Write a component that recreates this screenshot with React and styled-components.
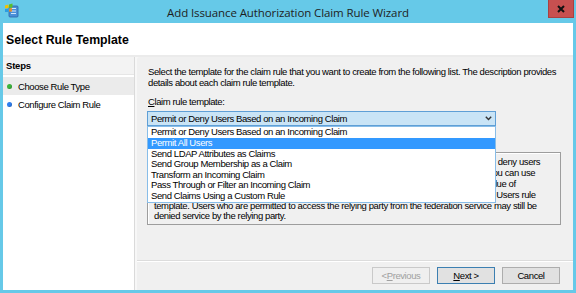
import React from 'react';
import styled, { createGlobalStyle } from 'styled-components';

const GlobalStyle = createGlobalStyle`
  html, body { margin: 0; padding: 0; background: #66c9e8; }
  body { font-family: "Liberation Sans", Arial, sans-serif; }
  * { box-sizing: border-box; }
`;

const Window = styled.div`
  width: 576px;
  height: 293px;
  background: #66c9e8;
  display: flex;
  flex-direction: column;
  overflow: hidden;
`;

const TitleBar = styled.div`
  flex: none;
  height: 23px;
  display: grid;
  grid-template-columns: 1fr auto 1fr;
  align-items: center;
`;

const TitleIcon = styled.div`
  display: flex;
  align-items: center;
  padding-left: 4px;
  padding-bottom: 2px;
`;

const TitleText = styled.div`
  font-family: "Open Sans", "Noto Sans", sans-serif;
  font-size: 11.5px;
  color: #1e1e1e;
  letter-spacing: -0.1px;
  padding-top: 1px;
`;

const TitleRight = styled.div`
  align-self: start;
  display: flex;
  justify-content: flex-end;
  padding-right: 2px;
`;

const CloseButton = styled.div`
  width: 26px;
  height: 18px;
  background: #c75050;
  border: 1px solid #a94141;
  border-top: none;
  display: flex;
  align-items: center;
  justify-content: center;
`;

const Client = styled.div`
  flex: 1;
  margin: 0 3px 3px;
  background: #ffffff;
  display: flex;
  flex-direction: column;
  min-height: 0;
`;

const Header = styled.div`
  flex: none;
  height: 32px;
  padding-left: 3px;
  display: flex;
  align-items: center;
  font-weight: bold;
  font-size: 12.3px;
  color: #000;
  padding-top: 1px;
`;

const HeaderRule = styled.div`
  flex: none;
  height: 2px;
  background: #ebebeb;
`;

const Body = styled.div`
  flex: 1;
  display: flex;
  gap: 2px;
  background: #f7f7f7;
  min-height: 0;
`;

const Sidebar = styled.div`
  flex: none;
  width: 132px;
  background: #ffffff;
  border-right: 1px solid #dadada;
  display: flex;
  flex-direction: column;
  font-size: 9.5px;
  letter-spacing: -0.4px;
  color: #000;
  white-space: nowrap;
`;

const StepsHeader = styled.div`
  height: 18px;
  background: #f3f3f3;
  border-bottom: 1px solid #e6e6e6;
  padding-left: 3px;
  display: flex;
  align-items: center;
  font-weight: bold;
  letter-spacing: -0.2px;
  margin-bottom: 2px;
`;

const StepItem = styled.div`
  height: 18px;
  padding-left: 4px;
  display: flex;
  align-items: center;
  gap: 6px;
  background: ${p => (p.$active ? '#ebebeb' : 'transparent')};
`;

const Dot = styled.span`
  width: 5px;
  height: 5px;
  border-radius: 50%;
  background: ${p => p.$color};
  box-shadow: inset -1px -1px 0 rgba(0,0,0,0.15);
  flex: none;
`;

const Main = styled.div`
  flex: 1;
  min-width: 0;
  background: #f0f0f0;
  display: flex;
  flex-direction: column;
  border-top-left-radius: 3px;
  font-size: 9.5px;
  letter-spacing: -0.4px;
  color: #000;
`;

const Content = styled.div`
  flex: 1;
  padding: 10px 12px 0 10px;
`;

const Intro = styled.p`
  margin: 0 0 0 1px;
  line-height: 10.8px;
  white-space: nowrap;
`;

const Label = styled.div`
  margin: 8px 0 0 1px;
  line-height: 10.8px;
  u { text-decoration: underline; }
`;

const SelectWrap = styled.div`
  position: relative;
  width: 349px;
  margin-top: 4px;
`;

const SelectBox = styled.div`
  height: 15px;
  background: #c9e4f6;
  border: 1px solid #5f9fd6;
  padding: 0 3px 0 3px;
  display: flex;
  align-items: center;
  justify-content: space-between;
`;

const DropList = styled.div`
  position: absolute;
  top: 100%;
  left: 0;
  width: 349px;
  background: #ffffff;
  border: 1px solid #88bde8;
  z-index: 2;
`;

const ListItem = styled.div`
  height: 10.6px;
  line-height: 10.6px;
  padding-left: 3px;
  white-space: nowrap;
  background: ${p => (p.$selected ? '#3399ff' : 'transparent')};
  color: ${p => (p.$selected ? '#ffffff' : '#000')};
`;

const DescBox = styled.div`
  margin-top: 26px;
  border: 1px solid #9d9d9d;
  box-shadow: inset 1px 1px 0 #ffffff;
  padding: 4px 6px 2px;
  line-height: 10.8px;
  white-space: nowrap;
  overflow: hidden;
  height: 73px;
`;

const Footer = styled.div`
  flex: none;
  height: 30px;
  border-top: 1px solid #dcdcdc;
  box-shadow: inset 0 1px 0 #ffffff;
  display: flex;
  justify-content: flex-end;
  align-items: flex-start;
  gap: 7px;
  padding: 6px 13px 0 0;
`;

const Button = styled.div`
  width: 58px;
  height: 17px;
  display: flex;
  align-items: center;
  justify-content: center;
  background: ${p => (p.$disabled ? '#efefef' : '#e1e1e1')};
  border: 1px solid ${p => (p.$primary ? '#3c7fb1' : p.$disabled ? '#c9c9c9' : '#adadad')};
  color: ${p => (p.$disabled ? '#a0a0a0' : '#000')};
  u { text-decoration: underline; }
`;

const AppIcon = () => (
  <svg width="15" height="15" viewBox="0 0 15 15">
    <rect x="5" y="3" width="9" height="11" rx="1" fill="#4a8fd8" stroke="#2b62a8" strokeWidth="0.8" />
    <rect x="7" y="5" width="5" height="1" fill="#cfe6fb" />
    <rect x="7" y="7.5" width="5" height="1" fill="#cfe6fb" />
    <rect x="7" y="10" width="5" height="1" fill="#cfe6fb" />
    <path d="M1 2.5 L4.5 1.5 L4.5 5 L1 5.5 Z" fill="#f2c200" />
    <path d="M5 1.4 L8.5 0.6 L8.5 4.4 L5 4.9 Z" fill="#5bbf2a" />
    <path d="M1 6 L4.5 5.5 L4.5 9 L1 9 Z" fill="#2e9de0" />
    <path d="M5 5.4 L8 5 L8 8.5 L5 8.8 Z" fill="#f28c1a" opacity="0.9" />
  </svg>
);

const CloseX = () => (
  <svg width="8" height="8" viewBox="0 0 8 8">
    <path d="M1 1 L7 7 M7 1 L1 7" stroke="#111" strokeWidth="2" />
  </svg>
);

const Chevron = () => (
  <svg width="7" height="5" viewBox="0 0 7 5">
    <path d="M0.8 0.8 L3.5 3.6 L6.2 0.8" stroke="#333" strokeWidth="1.4" fill="none" />
  </svg>
);

const templates = [
  'Permit or Deny Users Based on an Incoming Claim',
  'Permit All Users',
  'Send LDAP Attributes as Claims',
  'Send Group Membership as a Claim',
  'Transform an Incoming Claim',
  'Pass Through or Filter an Incoming Claim',
  'Send Claims Using a Custom Rule',
];

const descLines = [
  'Using the Permit or Deny Users Based on an Incoming Claim template, you can permit or deny users',
  'access to the relying party based on type and value of an incoming claim. For example, you can use',
  'this rule template to create a rule that permits only users that have a group claim with a value of',
  'Domain Admins. To permit all users to access the relying party, you can use the Permit All Users rule',
  'template.  Users who are permitted to access the relying party from the federation service may still be',
  'denied service by the relying party.',
];

export default function App() {
  return (
    <>
      <GlobalStyle />
      <Window>
        <TitleBar>
          <TitleIcon><AppIcon /></TitleIcon>
          <TitleText>Add Issuance Authorization Claim Rule Wizard</TitleText>
          <TitleRight>
            <CloseButton><CloseX /></CloseButton>
          </TitleRight>
        </TitleBar>
        <Client>
          <Header>Select Rule Template</Header>
          <HeaderRule />
          <Body>
            <Sidebar>
              <StepsHeader>Steps</StepsHeader>
              <StepItem $active><Dot $color="#3cb53c" />Choose Rule Type</StepItem>
              <StepItem><Dot $color="#2f7ff0" />Configure Claim Rule</StepItem>
            </Sidebar>
            <Main>
              <Content>
                <Intro>
                  Select the template for the claim rule that you want to create from the following list. The description provides
                  <br />
                  details about each claim rule template.
                </Intro>
                <Label><u>C</u>laim rule template:</Label>
                <SelectWrap>
                  <SelectBox>
                    <span>Permit or Deny Users Based on an Incoming Claim</span>
                    <Chevron />
                  </SelectBox>
                  <DropList>
                    {templates.map((t, i) => (
                      <ListItem key={t} $selected={i === 1}>{t}</ListItem>
                    ))}
                  </DropList>
                </SelectWrap>
                <DescBox>
                  {descLines.map((l, i) => (
                    <div key={i}>{l}</div>
                  ))}
                </DescBox>
              </Content>
              <Footer>
                <Button $disabled>&lt; <u>P</u>revious</Button>
                <Button $primary><u>N</u>ext &gt;</Button>
                <Button>Cancel</Button>
              </Footer>
            </Main>
          </Body>
        </Client>
      </Window>
    </>
  );
}
